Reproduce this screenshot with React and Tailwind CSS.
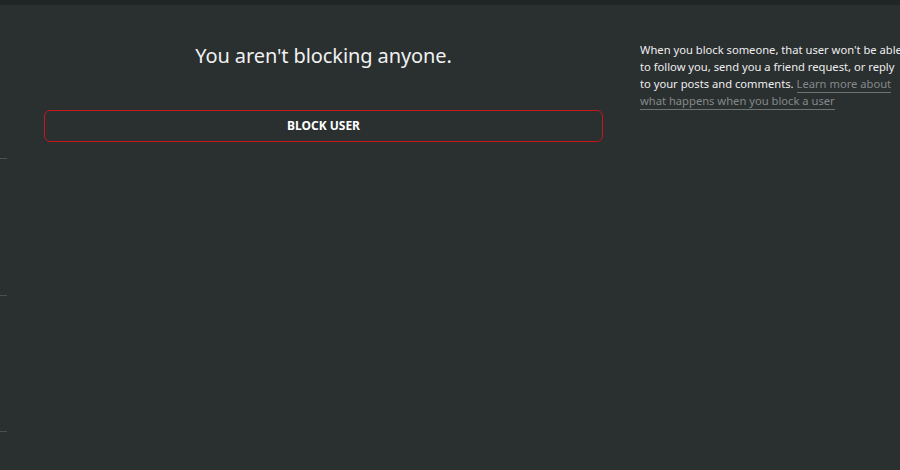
export default function App() {
  return (
    <div
      className="h-[470px] w-[900px] overflow-hidden bg-[#2a2f30] text-white"
      style={{ fontFamily: '"Noto Sans", "Open Sans", sans-serif' }}
    >
      <div className="h-[5px] bg-[#212526]" />

      <div className="flex">
        {/* left rail ticks */}
        <div className="flex w-[7px] shrink-0 flex-col">
          <div className="mt-[153px] h-px bg-[#4a4f50]" />
          <div className="mt-[136px] h-px bg-[#4a4f50]" />
          <div className="mt-[135px] h-px bg-[#4a4f50]" />
        </div>

        {/* main column */}
        <div className="ml-[37px] w-[559px] shrink-0">
          <h1 className="mt-[37px] text-center text-[20px] leading-[28px] tracking-[-0.1px] text-[#f1f1f1]">
            You aren't blocking anyone.
          </h1>
          <button className="mt-[40px] h-[32px] w-full rounded-[6px] border border-[#c8161d] text-[12px] font-bold text-white">
            BLOCK USER
          </button>
        </div>

        {/* info column */}
        <div className="ml-[37px] w-[300px] shrink-0 pt-[36px] text-[11.2px] leading-[17px] text-[#eeeeee]">
          <p className="whitespace-nowrap">
            When you block someone, that user won't be able
            <br />
            to follow you, send you a friend request, or reply
            <br />
            to your posts and comments.{" "}
            <a className="border-b border-[#6d7273] pb-px text-[#85898a]" href="#">
              Learn more about
              <br />
              what happens when you block a user
            </a>
          </p>
        </div>
      </div>
    </div>
  );
}
